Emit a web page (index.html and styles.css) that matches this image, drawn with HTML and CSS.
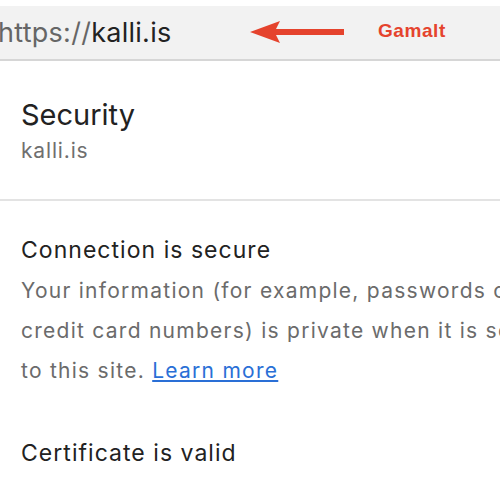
FILE: index.html
```html
<!DOCTYPE html>
<html>
<head>
    <title>Security</title>
    <link rel="stylesheet" href="styles.css">
</head>
<body>
    <div class="topbar">
        <div class="url"><span class="scheme">https://</span>kalli.is</div>
        <svg class="arrow" width="96" height="26" viewBox="0 0 96 26">
            <path d="M0 13 L30 2 L26 10 L94 10 L94 16 L26 16 L30 24 Z" fill="#e5432d"/>
        </svg>
        <div class="label">Gamalt</div>
    </div>

    <div class="section site">
        <h1>Security</h1>
        <div class="host">kalli.is</div>
    </div>

    <div class="section conn">
        <h2>Connection is secure</h2>
        <p>Your information (for example, passwords or<br>credit card numbers) is private when it is sent<br>to this site. <a href="#">Learn more</a></p>
    </div>

    <div class="section cert">
        <h2>Certificate is valid</h2>
    </div>
</body>
</html>
```

FILE: styles.css
```css
body {
    margin: 0;
    font-family: Inter, "Noto Sans", sans-serif;
    background: #fff;
    overflow: hidden;
}

.topbar {
    margin-top: 6px;
    height: 53px;
    background: #f2f2f2;
    border-bottom: 2px solid #d6d6d6;
    display: flex;
    align-items: center;
    white-space: nowrap;
}

.url {
    font-size: 27px;
    letter-spacing: 0.01em;
    color: #222;
    margin-left: -2px;
    width: 252px;
}

.scheme {
    color: #666;
}

.arrow {
    display: block;
    margin-top: -2px;
}

.label {
    margin-left: 32px;
    font-family: "Liberation Sans", Arial, sans-serif;
    font-size: 19px;
    letter-spacing: 0.03em;
    font-weight: bold;
    color: #e5432d;
    margin-top: -4px;
}

.section {
    padding: 0 21px;
    white-space: nowrap;
}

.site {
    padding-top: 36px;
    padding-bottom: 36px;
    border-bottom: 2px solid #e3e3e3;
}

h1 {
    margin: 0;
    font-size: 29px;
    font-weight: normal;
    color: #222;
}

.host {
    margin-top: 6px;
    font-size: 21px;
    letter-spacing: 0.04em;
    color: #6f6f6f;
}

.conn {
    padding-top: 35px;
}

h2 {
    margin: 0;
    font-size: 23px;
    letter-spacing: 0.045em;
    font-weight: normal;
    color: #222;
}

.conn p {
    margin: 7px 0 0;
    font-size: 21px;
    letter-spacing: 0.06em;
    line-height: 40px;
    color: #6b6b6b;
}

.conn a {
    color: #2a6fd6;
}

.cert {
    padding-top: 48px;
}
```
